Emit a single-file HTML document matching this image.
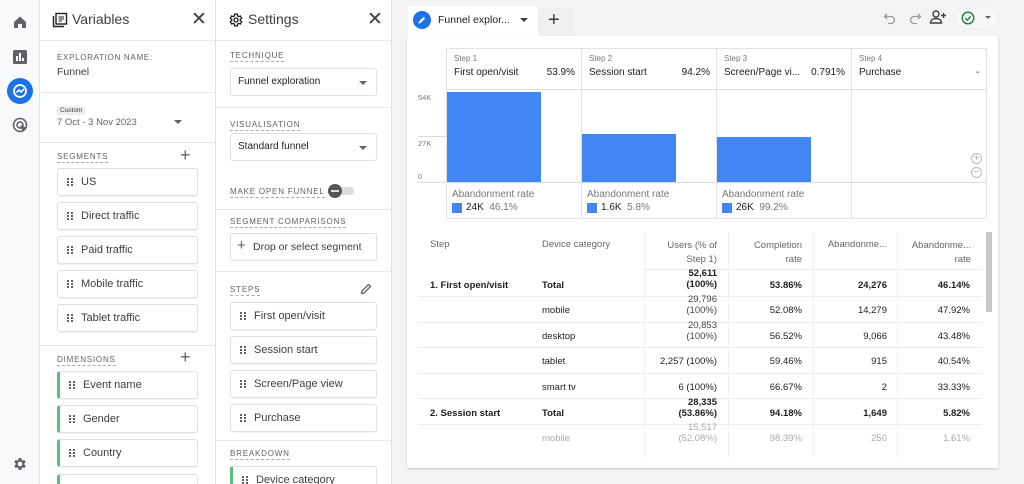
<!DOCTYPE html>
<html><head><meta charset="utf-8"><style>
*{box-sizing:border-box;margin:0;padding:0}
html,body{width:1024px;height:484px;overflow:hidden}
body{font-family:"Liberation Sans",Arial,sans-serif;background:#f4f4f5;position:relative;color:#202124}
.a{position:absolute}
.panel{background:#fff;border-right:1px solid #e3e3e3;top:0;height:484px;overflow:hidden}
.sep{position:absolute;left:0;right:0;height:1px;background:#e8e8e8}
.lbl{position:absolute;font-size:8px;letter-spacing:.8px;color:#5f6368;border-bottom:1px dashed #aaa;padding-bottom:1px}
.chip{position:absolute;height:28px;border:1px solid #e0e0e0;border-radius:3px;background:#fff;font-size:11px;line-height:26px;padding-left:23px;color:#3c4043;box-shadow:0 1px 1px rgba(0,0,0,.06)}
.chip:before{content:"";position:absolute;left:9px;top:9px;width:2px;height:2px;background:#5f6368;box-shadow:4px 0 #5f6368,0 3px #5f6368,4px 3px #5f6368,0 6px #5f6368,4px 6px #5f6368}
.g{border-left:3px solid #5bbf7a}
.dd{position:absolute;height:28px;border:1px solid #e0e0e0;border-radius:3px;font-size:10px;line-height:26px;padding-left:7px;color:#202124}
.dd.arr:after{content:"";position:absolute;right:9px;top:12px;border:4px solid transparent;border-top:4px solid #5f6368}
.t{position:absolute;font-size:9.5px;white-space:nowrap}
.r{text-align:right}
.b{font-weight:bold}
.vl{position:absolute;width:1px;background:#e3e3e3}
.hl{position:absolute;height:1px;background:#ececec}
</style></head><body>
<!-- rail -->
<div class="a" style="left:0;top:0;width:40px;height:484px;background:#f8f9fa;border-right:1px solid #e3e3e3"></div>
<svg class="a" style="left:12px;top:14px" width="16" height="16" viewBox="0 0 16 16"><path d="M2 8L8 2.5 14 8V14H10V10H6V14H2Z" fill="#5f6368"/></svg>
<svg class="a" style="left:13px;top:50px" width="14" height="14" viewBox="0 0 14 14"><rect width="14" height="14" rx="1.5" fill="#5f6368"/><rect x="3" y="6" width="2" height="5" fill="#fff"/><rect x="6" y="3" width="2" height="8" fill="#fff"/><rect x="9" y="8" width="2" height="3" fill="#fff"/></svg>
<div class="a" style="left:7px;top:78px;width:26px;height:26px;border-radius:50%;background:#1a73e8"></div>
<svg class="a" style="left:12px;top:83px" width="16" height="16" viewBox="0 0 16 16"><circle cx="8" cy="8" r="6" fill="none" stroke="#fff" stroke-width="1.8"/><path d="M4.5 9.5L7 7l2 2 3-3" fill="none" stroke="#fff" stroke-width="1.6"/></svg>
<svg class="a" style="left:12px;top:117px" width="17" height="17" viewBox="0 0 17 17"><circle cx="8" cy="8" r="6.5" fill="none" stroke="#5f6368" stroke-width="1.6"/><circle cx="8" cy="8" r="3" fill="none" stroke="#5f6368" stroke-width="1.6"/><path d="M8 8l7 3-3 1-1 3z" fill="#5f6368"/></svg>
<svg class="a" style="left:12px;top:456px" width="16" height="16" viewBox="0 0 24 24"><path fill="#5f6368" d="M19.4 13a7.5 7.5 0 000-2l2.1-1.6-2-3.5-2.5 1a7 7 0 00-1.7-1L15 3h-4l-.4 2.9a7 7 0 00-1.7 1l-2.5-1-2 3.5L6.6 11a7.5 7.5 0 000 2l-2.1 1.6 2 3.5 2.5-1a7 7 0 001.7 1L11 21h4l.4-2.9a7 7 0 001.7-1l2.5 1 2-3.5zM13 15.5a3.5 3.5 0 110-7 3.5 3.5 0 010 7z" transform="translate(-1 0)"/></svg>

<!-- Variables -->
<div class="a panel" style="left:40px;width:176px">
 <svg class="a" style="left:12px;top:12px" width="16" height="16" viewBox="0 0 16 16"><rect x="4" y="1.5" width="10.5" height="10.5" fill="none" stroke="#202124" stroke-width="1.4"/><path d="M1.5 4v10.5H12" fill="none" stroke="#202124" stroke-width="1.4"/><path d="M6.5 5h5.5M6.5 7h5.5M6.5 9h3.5" stroke="#202124" stroke-width="1.1"/></svg>
 <div class="t" style="left:32px;top:11px;font-size:14px;color:#3c4043">Variables</div>
 <div class="t" style="left:151px;top:8px;font-size:19px;color:#3c4043">✕</div>
 <div class="sep" style="top:40px"></div>
 <div class="t" style="left:17px;top:53px;font-size:8px;letter-spacing:.7px;color:#5f6368">EXPLORATION NAME:</div>
 <div class="t" style="left:17px;top:66px;font-size:10.5px;color:#3c4043">Funnel</div>
 <div class="sep" style="top:92px"></div>
 <div class="t" style="left:17px;top:106px;font-size:6.5px;background:#eee;padding:1px 3px;color:#3c4043">Custom</div>
 <div class="t" style="left:17px;top:117px;font-size:9.5px;color:#5f6368">7 Oct - 3 Nov 2023</div>
 <div class="a" style="left:134px;top:120px;border:4px solid transparent;border-top:4px solid #5f6368"></div>
 <div class="sep" style="top:142px"></div>
 <div class="lbl" style="left:17px;top:152px">SEGMENTS</div>
 <div class="t" style="left:140px;top:145px;font-size:18px;color:#5f6368;font-weight:300">+</div>
 <div class="chip" style="left:17px;top:168px;width:141px">US</div>
 <div class="chip" style="left:17px;top:202px;width:141px">Direct traffic</div>
 <div class="chip" style="left:17px;top:236px;width:141px">Paid traffic</div>
 <div class="chip" style="left:17px;top:270px;width:141px">Mobile traffic</div>
 <div class="chip" style="left:17px;top:304px;width:141px">Tablet traffic</div>
 <div class="sep" style="top:345px"></div>
 <div class="lbl" style="left:17px;top:355px">DIMENSIONS</div>
 <div class="t" style="left:140px;top:347px;font-size:18px;color:#5f6368">+</div>
 <div class="chip g" style="left:17px;top:371px;width:141px">Event name</div>
 <div class="chip g" style="left:17px;top:405px;width:141px">Gender</div>
 <div class="chip g" style="left:17px;top:439px;width:141px">Country</div>
 <div class="chip g" style="left:17px;top:474px;width:141px"></div>
</div>

<!-- Settings -->
<div class="a panel" style="left:216px;width:176px">
 <svg class="a" style="left:12px;top:12px" width="16" height="16" viewBox="0 0 24 24"><path fill="none" stroke="#202124" stroke-width="2" d="M19.4 13a7.5 7.5 0 000-2l2.1-1.6-2-3.5-2.5 1a7 7 0 00-1.7-1L15 3h-4l-.4 2.9a7 7 0 00-1.7 1l-2.5-1-2 3.5L6.6 11a7.5 7.5 0 000 2l-2.1 1.6 2 3.5 2.5-1a7 7 0 001.7 1L11 21h4l.4-2.9a7 7 0 001.7-1l2.5 1 2-3.5z" transform="translate(-1 0)"/><circle cx="12" cy="12" r="3" fill="none" stroke="#202124" stroke-width="2"/></svg>
 <div class="t" style="left:32px;top:11px;font-size:14px;color:#3c4043">Settings</div>
 <div class="t" style="left:151px;top:8px;font-size:19px;color:#3c4043">✕</div>
 <div class="sep" style="top:40px"></div>
 <div class="lbl" style="left:14px;top:51px">TECHNIQUE</div>
 <div class="dd arr" style="left:14px;top:68px;width:147px">Funnel exploration</div>
 <div class="sep" style="top:107px"></div>
 <div class="lbl" style="left:14px;top:120px">VISUALISATION</div>
 <div class="dd arr" style="left:14px;top:133px;width:147px">Standard funnel</div>
 <div class="lbl" style="left:14px;top:187px">MAKE OPEN FUNNEL</div>
 <div class="a" style="left:116px;top:187px;width:22px;height:8px;border-radius:4px;background:#ddd"></div>
 <div class="a" style="left:112px;top:184px;width:14px;height:14px;border-radius:50%;background:#555"></div>
 <div class="a" style="left:115px;top:190px;width:8px;height:2px;background:#ddd"></div>
 <div class="sep" style="top:209px"></div>
 <div class="lbl" style="left:14px;top:217px">SEGMENT COMPARISONS</div>
 <div class="dd" style="left:14px;top:233px;width:147px;padding-left:22px;font-size:10.5px;color:#3c4043">Drop or select segment</div>
 <div class="t" style="left:21px;top:237px;font-size:15px;color:#5f6368">+</div>
 <div class="sep" style="top:271px"></div>
 <div class="lbl" style="left:14px;top:285px">STEPS</div>
 <svg class="a" style="left:144px;top:283px" width="12" height="12" viewBox="0 0 12 12"><path d="M1.5 10.5l.5-2.5 6.5-6.5 2 2L4 10z" fill="none" stroke="#5f6368" stroke-width="1.3"/></svg>
 <div class="chip" style="left:14px;top:302px;width:147px">First open/visit</div>
 <div class="chip" style="left:14px;top:336px;width:147px">Session start</div>
 <div class="chip" style="left:14px;top:370px;width:147px">Screen/Page view</div>
 <div class="chip" style="left:14px;top:404px;width:147px">Purchase</div>
 <div class="sep" style="top:440px"></div>
 <div class="lbl" style="left:14px;top:449px">BREAKDOWN</div>
 <div class="chip g" style="left:14px;top:466px;width:147px">Device category</div>
</div>

<!-- top bar -->
<div class="a" style="left:408px;top:6px;width:130px;height:30px;background:#fff;border-radius:3px 3px 0 0"></div>
<div class="a" style="left:413px;top:11px;width:18px;height:18px;border-radius:50%;background:#1a73e8"></div>
<svg class="a" style="left:417px;top:15px" width="10" height="10" viewBox="0 0 10 10"><path d="M1.5 8.5l.4-2 4.6-4.6 1.6 1.6L3.5 8.1z" fill="#fff"/></svg>
<div class="t" style="left:438px;top:14px;font-size:10.5px;color:#202124">Funnel explor...</div>
<div class="a" style="left:520px;top:18px;border:4px solid transparent;border-top:4px solid #3c4043"></div>
<div class="a" style="left:538px;top:8px;width:36px;height:28px;background:#f0f0f0"></div>
<div class="t" style="left:548px;top:9px;font-size:20px;color:#3c4043;font-weight:300">+</div>
<svg class="a" style="left:883px;top:11px" width="14" height="14" viewBox="0 0 14 14"><path d="M4 3L1.5 5.5 4 8M1.5 5.5H8a3.5 3.5 0 010 7H5" fill="none" stroke="#999" stroke-width="1.3"/></svg>
<svg class="a" style="left:908px;top:11px" width="14" height="14" viewBox="0 0 14 14"><path d="M10 3l2.5 2.5L10 8M12.5 5.5H6a3.5 3.5 0 000 7h3" fill="none" stroke="#999" stroke-width="1.3"/></svg>
<svg class="a" style="left:929px;top:9px" width="18" height="16" viewBox="0 0 18 16"><circle cx="7" cy="5" r="3" fill="none" stroke="#3c4043" stroke-width="1.4"/><path d="M1.5 14c0-3 2.5-4.5 5.5-4.5S12.5 11 12.5 14z" fill="none" stroke="#3c4043" stroke-width="1.4"/><path d="M14.5 4v5M12 6.5h5" stroke="#3c4043" stroke-width="1.4"/></svg>
<div class="a" style="left:955px;top:7px;width:44px;height:22px;border-radius:11px;background:#f8f8f8;border:1px solid #eee"></div>
<svg class="a" style="left:961px;top:11px" width="14" height="14" viewBox="0 0 14 14"><circle cx="7" cy="7" r="5.8" fill="none" stroke="#188038" stroke-width="1.4"/><path d="M4.3 7.2l1.9 1.9 3.6-3.8" fill="none" stroke="#188038" stroke-width="1.4"/></svg>
<div class="a" style="left:985px;top:16px;border:3px solid transparent;border-top:3px solid #5f6368"></div>

<!-- card -->
<div class="a" style="left:407px;top:36px;width:591px;height:432px;background:#fff;box-shadow:0 1px 2px rgba(0,0,0,.2)"></div>
<!-- chart -->
<div class="hl" style="left:446px;top:48px;width:540px;background:#e3e3e3"></div>
<div class="hl" style="left:446px;top:89px;width:540px;background:#e0e0e0"></div>
<div class="hl" style="left:446px;top:182px;width:540px;background:#ddd"></div>
<div class="hl" style="left:446px;top:218px;width:540px;background:#e3e3e3"></div>
<div class="hl" style="left:418px;top:136px;width:28px;background:#ddd"></div>
<div class="hl" style="left:418px;top:182px;width:28px;background:#ddd"></div>
<div class="vl" style="left:446px;top:48px;height:170px"></div>
<div class="vl" style="left:581px;top:48px;height:170px"></div>
<div class="vl" style="left:716px;top:48px;height:170px"></div>
<div class="vl" style="left:851px;top:48px;height:170px"></div>
<div class="vl" style="left:986px;top:48px;height:170px"></div>
<div class="a" style="left:447px;top:92px;width:94px;height:90px;background:#4285f4"></div>
<div class="a" style="left:582px;top:134px;width:94px;height:48px;background:#4285f4"></div>
<div class="a" style="left:717px;top:137px;width:94px;height:45px;background:#4285f4"></div>
<div class="t" style="left:418px;top:93px;font-size:7.5px;color:#777">54K</div>
<div class="t" style="left:418px;top:139px;font-size:7.5px;color:#777">27K</div>
<div class="t" style="left:418px;top:172px;font-size:7.5px;color:#777">0</div>
<div class="t" style="left:454px;top:54px;font-size:8px;color:#777">Step 1</div>
<div class="t" style="left:454px;top:67px;font-size:10px">First open/visit</div>
<div class="t r" style="left:530px;top:67px;width:45px;font-size:10px">53.9%</div>
<div class="t" style="left:589px;top:54px;font-size:8px;color:#777">Step 2</div>
<div class="t" style="left:589px;top:67px;font-size:10px">Session start</div>
<div class="t r" style="left:665px;top:67px;width:45px;font-size:10px">94.2%</div>
<div class="t" style="left:724px;top:54px;font-size:8px;color:#777">Step 3</div>
<div class="t" style="left:724px;top:67px;font-size:10px">Screen/Page vi...</div>
<div class="t r" style="left:800px;top:67px;width:45px;font-size:10px">0.791%</div>
<div class="t" style="left:859px;top:54px;font-size:8px;color:#777">Step 4</div>
<div class="t" style="left:859px;top:67px;font-size:10px">Purchase</div>
<div class="t" style="left:976px;top:67px;font-size:10px">-</div>
<div class="a" style="left:971px;top:153px;width:11px;height:11px;border:1px solid #bbb;border-radius:50%;font-size:10px;line-height:9px;text-align:center;color:#aaa">+</div>
<div class="a" style="left:971px;top:167px;width:11px;height:11px;border:1px solid #bbb;border-radius:50%;font-size:10px;line-height:9px;text-align:center;color:#aaa">−</div>
<div class="t" style="left:452px;top:189px;font-size:10px;color:#777">Abandonment rate</div>
<div class="a" style="left:452px;top:203px;width:10px;height:10px;background:#4285f4"></div>
<div class="t" style="left:466px;top:202px;font-size:10px">24K <span style="color:#777">&nbsp;46.1%</span></div>
<div class="t" style="left:587px;top:189px;font-size:10px;color:#777">Abandonment rate</div>
<div class="a" style="left:587px;top:203px;width:10px;height:10px;background:#4285f4"></div>
<div class="t" style="left:601px;top:202px;font-size:10px">1.6K <span style="color:#777">&nbsp;5.8%</span></div>
<div class="t" style="left:722px;top:189px;font-size:10px;color:#777">Abandonment rate</div>
<div class="a" style="left:722px;top:203px;width:10px;height:10px;background:#4285f4"></div>
<div class="t" style="left:736px;top:202px;font-size:10px">26K <span style="color:#777">&nbsp;99.2%</span></div>

<!-- table -->
<div class="vl" style="left:644px;top:232px;height:225px;background:#f0f0f0"></div>
<div class="vl" style="left:728px;top:232px;height:225px;background:#f0f0f0"></div>
<div class="vl" style="left:813px;top:232px;height:225px;background:#f0f0f0"></div>
<div class="vl" style="left:897px;top:232px;height:225px;background:#f0f0f0"></div>
<div class="a" style="left:986px;top:232px;width:6px;height:80px;background:#c8c8c8"></div>
<div class="t" style="left:430px;top:239px;font-size:9.5px;color:#666">Step</div>
<div class="t" style="left:542px;top:239px;font-size:9.5px;color:#666">Device category</div>
<div class="t r" style="left:640px;top:239px;width:77px;font-size:9.5px;color:#666;line-height:14px;white-space:normal">Users (% of<br>Step 1)</div>
<div class="t r" style="left:740px;top:239px;width:62px;font-size:9.5px;color:#666;line-height:14px">Completion<br>rate</div>
<div class="t r" style="left:810px;top:239px;width:77px;font-size:9.5px;color:#666">Abandonme...</div>
<div class="t r" style="left:893px;top:239px;width:78px;font-size:9.5px;color:#666;line-height:14px">Abandonme...<br>rate</div>
<div class="hl" style="left:644px;top:269px;width:338px"></div>
<div class="hl" style="left:418px;top:296px;width:564px"></div>
<div class="hl" style="left:418px;top:322px;width:564px"></div>
<div class="hl" style="left:418px;top:347px;width:564px"></div>
<div class="hl" style="left:418px;top:373px;width:564px"></div>
<div class="hl" style="left:418px;top:398px;width:564px"></div>
<div class="hl" style="left:418px;top:424px;width:564px"></div>

<div class="t b" style="left:430px;top:280px">1. First open/visit</div>
<div class="t b" style="left:542px;top:280px">Total</div>
<div class="t r b" style="left:640px;top:268px;width:77px;line-height:11px">52,611<br>(100%)</div>
<div class="t r b" style="left:730px;top:280px;width:72px">53.86%</div>
<div class="t r b" style="left:815px;top:280px;width:72px">24,276</div>
<div class="t r b" style="left:898px;top:280px;width:72px">46.14%</div>

<div class="t" style="left:542px;top:305px">mobile</div>
<div class="t r" style="left:640px;top:294px;width:77px;line-height:11px;color:#444">29,796<br>(100%)</div>
<div class="t r" style="left:730px;top:305px;width:72px">52.08%</div>
<div class="t r" style="left:815px;top:305px;width:72px">14,279</div>
<div class="t r" style="left:898px;top:305px;width:72px">47.92%</div>

<div class="t" style="left:542px;top:331px">desktop</div>
<div class="t r" style="left:640px;top:320px;width:77px;line-height:11px;color:#444">20,853<br>(100%)</div>
<div class="t r" style="left:730px;top:331px;width:72px">56.52%</div>
<div class="t r" style="left:815px;top:331px;width:72px">9,066</div>
<div class="t r" style="left:898px;top:331px;width:72px">43.48%</div>

<div class="t" style="left:542px;top:356px">tablet</div>
<div class="t r" style="left:640px;top:356px;width:77px">2,257 (100%)</div>
<div class="t r" style="left:730px;top:356px;width:72px">59.46%</div>
<div class="t r" style="left:815px;top:356px;width:72px">915</div>
<div class="t r" style="left:898px;top:356px;width:72px">40.54%</div>

<div class="t" style="left:542px;top:382px">smart tv</div>
<div class="t r" style="left:640px;top:382px;width:77px">6 (100%)</div>
<div class="t r" style="left:730px;top:382px;width:72px">66.67%</div>
<div class="t r" style="left:815px;top:382px;width:72px">2</div>
<div class="t r" style="left:898px;top:382px;width:72px">33.33%</div>

<div class="t b" style="left:430px;top:408px">2. Session start</div>
<div class="t b" style="left:542px;top:408px">Total</div>
<div class="t r b" style="left:640px;top:397px;width:77px;line-height:11px">28,335<br>(53.86%)</div>
<div class="t r b" style="left:730px;top:408px;width:72px">94.18%</div>
<div class="t r b" style="left:815px;top:408px;width:72px">1,649</div>
<div class="t r b" style="left:898px;top:408px;width:72px">5.82%</div>

<div style="color:#aaa">
<div class="t" style="left:542px;top:433px">mobile</div>
<div class="t r" style="left:640px;top:422px;width:77px;line-height:11px">15,517<br>(52.08%)</div>
<div class="t r" style="left:730px;top:433px;width:72px">98.39%</div>
<div class="t r" style="left:815px;top:433px;width:72px">250</div>
<div class="t r" style="left:898px;top:433px;width:72px">1.61%</div>
</div>
</body></html>
